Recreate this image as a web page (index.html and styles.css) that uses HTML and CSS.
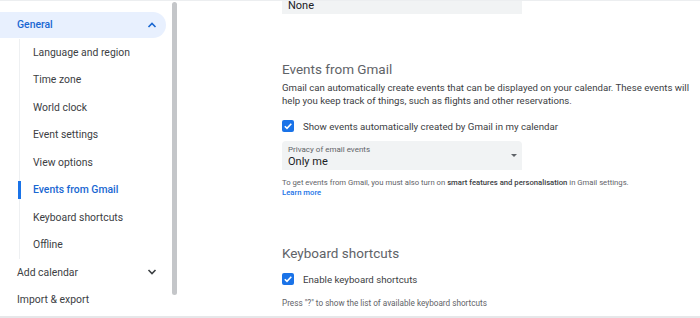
FILE: index.html
```html
<!DOCTYPE html>
<html lang="en">
<head>
  <meta charset="UTF-8" />
  <title>Settings - Calendar</title>
  <link rel="stylesheet" href="styles.css">
</head>
<body>
  <div class="page">
    <aside class="sidebar">
      <nav class="menu">
        <div class="menu-item active-group">
          <span>General</span>
          <svg class="chev" width="10" height="6" viewBox="0 0 10 6"><polyline points="1.5,5 5,1.5 8.5,5" fill="none" stroke="#1967d2" stroke-width="1.6"/></svg>
        </div>
        <div class="submenu">
          <a class="sub-item" href="#">Language and region</a>
          <a class="sub-item" href="#">Time zone</a>
          <a class="sub-item" href="#">World clock</a>
          <a class="sub-item" href="#">Event settings</a>
          <a class="sub-item" href="#">View options</a>
          <a class="sub-item current" href="#">Events from Gmail</a>
          <a class="sub-item" href="#">Keyboard shortcuts</a>
          <a class="sub-item" href="#">Offline</a>
        </div>
        <div class="menu-item">
          <span>Add calendar</span>
          <svg class="chev" width="10" height="6" viewBox="0 0 10 6"><polyline points="1.5,1 5,4.5 8.5,1" fill="none" stroke="#3c4043" stroke-width="1.6"/></svg>
        </div>
        <div class="menu-item">
          <span>Import &amp; export</span>
        </div>
      </nav>
      <div class="scrollbar"></div>
    </aside>

    <main class="content">
      <div class="select top-select">
        <div class="select-value">None</div>
      </div>

      <section class="section">
        <h2>Events from Gmail</h2>
        <p class="desc">Gmail can automatically create events that can be displayed on your calendar. These events will help you keep track of things, such as flights and other reservations.</p>
        <label class="check-row">
          <span class="checkbox"><svg width="10" height="10" viewBox="0 0 10 10"><polyline points="1.8,5.2 4,7.4 8.3,2.8" fill="none" stroke="#fff" stroke-width="1.6"/></svg></span>
          <span>Show events automatically created by Gmail in my calendar</span>
        </label>
        <div class="select">
          <div class="select-label">Privacy of email events</div>
          <div class="select-value">Only me</div>
          <span class="arrow"></span>
        </div>
        <p class="help">To get events from Gmail, you must also turn on <b>smart features and personalisation</b> in Gmail settings.<br><a href="#">Learn more</a></p>
      </section>

      <section class="section kb">
        <h2>Keyboard shortcuts</h2>
        <label class="check-row">
          <span class="checkbox"><svg width="10" height="10" viewBox="0 0 10 10"><polyline points="1.8,5.2 4,7.4 8.3,2.8" fill="none" stroke="#fff" stroke-width="1.6"/></svg></span>
          <span>Enable keyboard shortcuts</span>
        </label>
        <p class="help press">Press "?" to show the list of available keyboard shortcuts</p>
      </section>
    </main>
  </div>
</body>
</html>
```

FILE: styles.css
```css
body {
  margin: 0;
  font-family: Roboto, "Liberation Sans", sans-serif;
  color: #3c4043;
  background: #fff;
}
.page {
  display: flex;
  height: 318px;
  box-sizing: border-box;
  border-top: 1px solid #eceef0;
  border-bottom: 2px solid #e6e7e9;
  overflow: hidden;
}
.sidebar {
  width: 180px;
  flex-shrink: 0;
  display: flex;
}
.menu {
  width: 166px;
  padding-top: 10px;
}
.menu-item {
  height: 27.5px;
  display: flex;
  align-items: center;
  justify-content: space-between;
  padding: 0 9px 0 17px;
  font-size: 10.4px;
  color: #3c4043;
  border-radius: 0 14px 14px 0;
}
.active-group {
  background: #e8f0fe;
  color: #1967d2;
  font-weight: 500;
  height: 26px;
  margin: 0.75px 0;
}
.submenu {
  margin-left: 19px;
  border-left: 1px solid #eef0f2;
  display: flex;
  flex-direction: column;
}
.sub-item {
  height: 27.5px;
  display: flex;
  align-items: center;
  padding-left: 13px;
  font-size: 10.4px;
  color: #3c4043;
  text-decoration: none;
  position: relative;
}
.sub-item.current {
  color: #1967d2;
  font-weight: 500;
}
.sub-item.current::before {
  content: "";
  position: absolute;
  left: -2px;
  top: 5px;
  width: 3px;
  height: 18px;
  background: #1a73e8;
}
.scrollbar {
  width: 5px;
  margin: 1px 0 21px 6px;
  background: #c4c6c9;
  border-radius: 3px;
}
.content {
  flex: 1;
  padding-left: 102px;
}
.select {
  width: 240px;
  height: 29px;
  box-sizing: border-box;
  background: #f1f3f4;
  border-radius: 4px 4px 0 0;
  padding: 4px 6px 0;
  position: relative;
}
.top-select {
  margin-top: -16px;
  padding-top: 15px;
}
.top-select .select-value {
  line-height: 11px;
}
.select-label {
  font-size: 8px;
  line-height: 10px;
  color: #5f6368;
}
.select-value {
  font-size: 11px;
  line-height: 13px;
  color: #202124;
}
.arrow {
  position: absolute;
  right: 5px;
  top: 13px;
  border-left: 3px solid transparent;
  border-right: 3px solid transparent;
  border-top: 3px solid #5f6368;
}
.section h2 {
  margin: 46px 0 0;
  font-size: 13.5px;
  line-height: 18px;
  font-weight: 400;
  color: #5f6368;
}
.desc {
  margin: 2.5px 0 0;
  font-size: 9.65px;
  line-height: 13px;
  color: #3c4043;
}
.check-row {
  display: flex;
  align-items: center;
  gap: 9px;
  height: 16px;
  margin-top: 11.5px;
  font-size: 9.7px;
  color: #3c4043;
}
.checkbox {
  width: 12px;
  height: 12px;
  border-radius: 2px;
  background: #1a73e8;
  display: flex;
  align-items: center;
  justify-content: center;
}
.section .select {
  margin-top: 7px;
}
.help {
  margin: 8px 0 0;
  font-size: 7.7px;
  line-height: 10px;
  color: #5f6368;
}
.help b {
  font-weight: 500;
  color: #3c4043;
}
.help a {
  color: #1a73e8;
  text-decoration: none;
  font-weight: 500;
}
.kb h2 {
  margin-top: 46px;
}
.kb .check-row {
  margin-top: 9px;
}
.press {
  margin-top: 11px;
  font-size: 8.2px;
}
```
